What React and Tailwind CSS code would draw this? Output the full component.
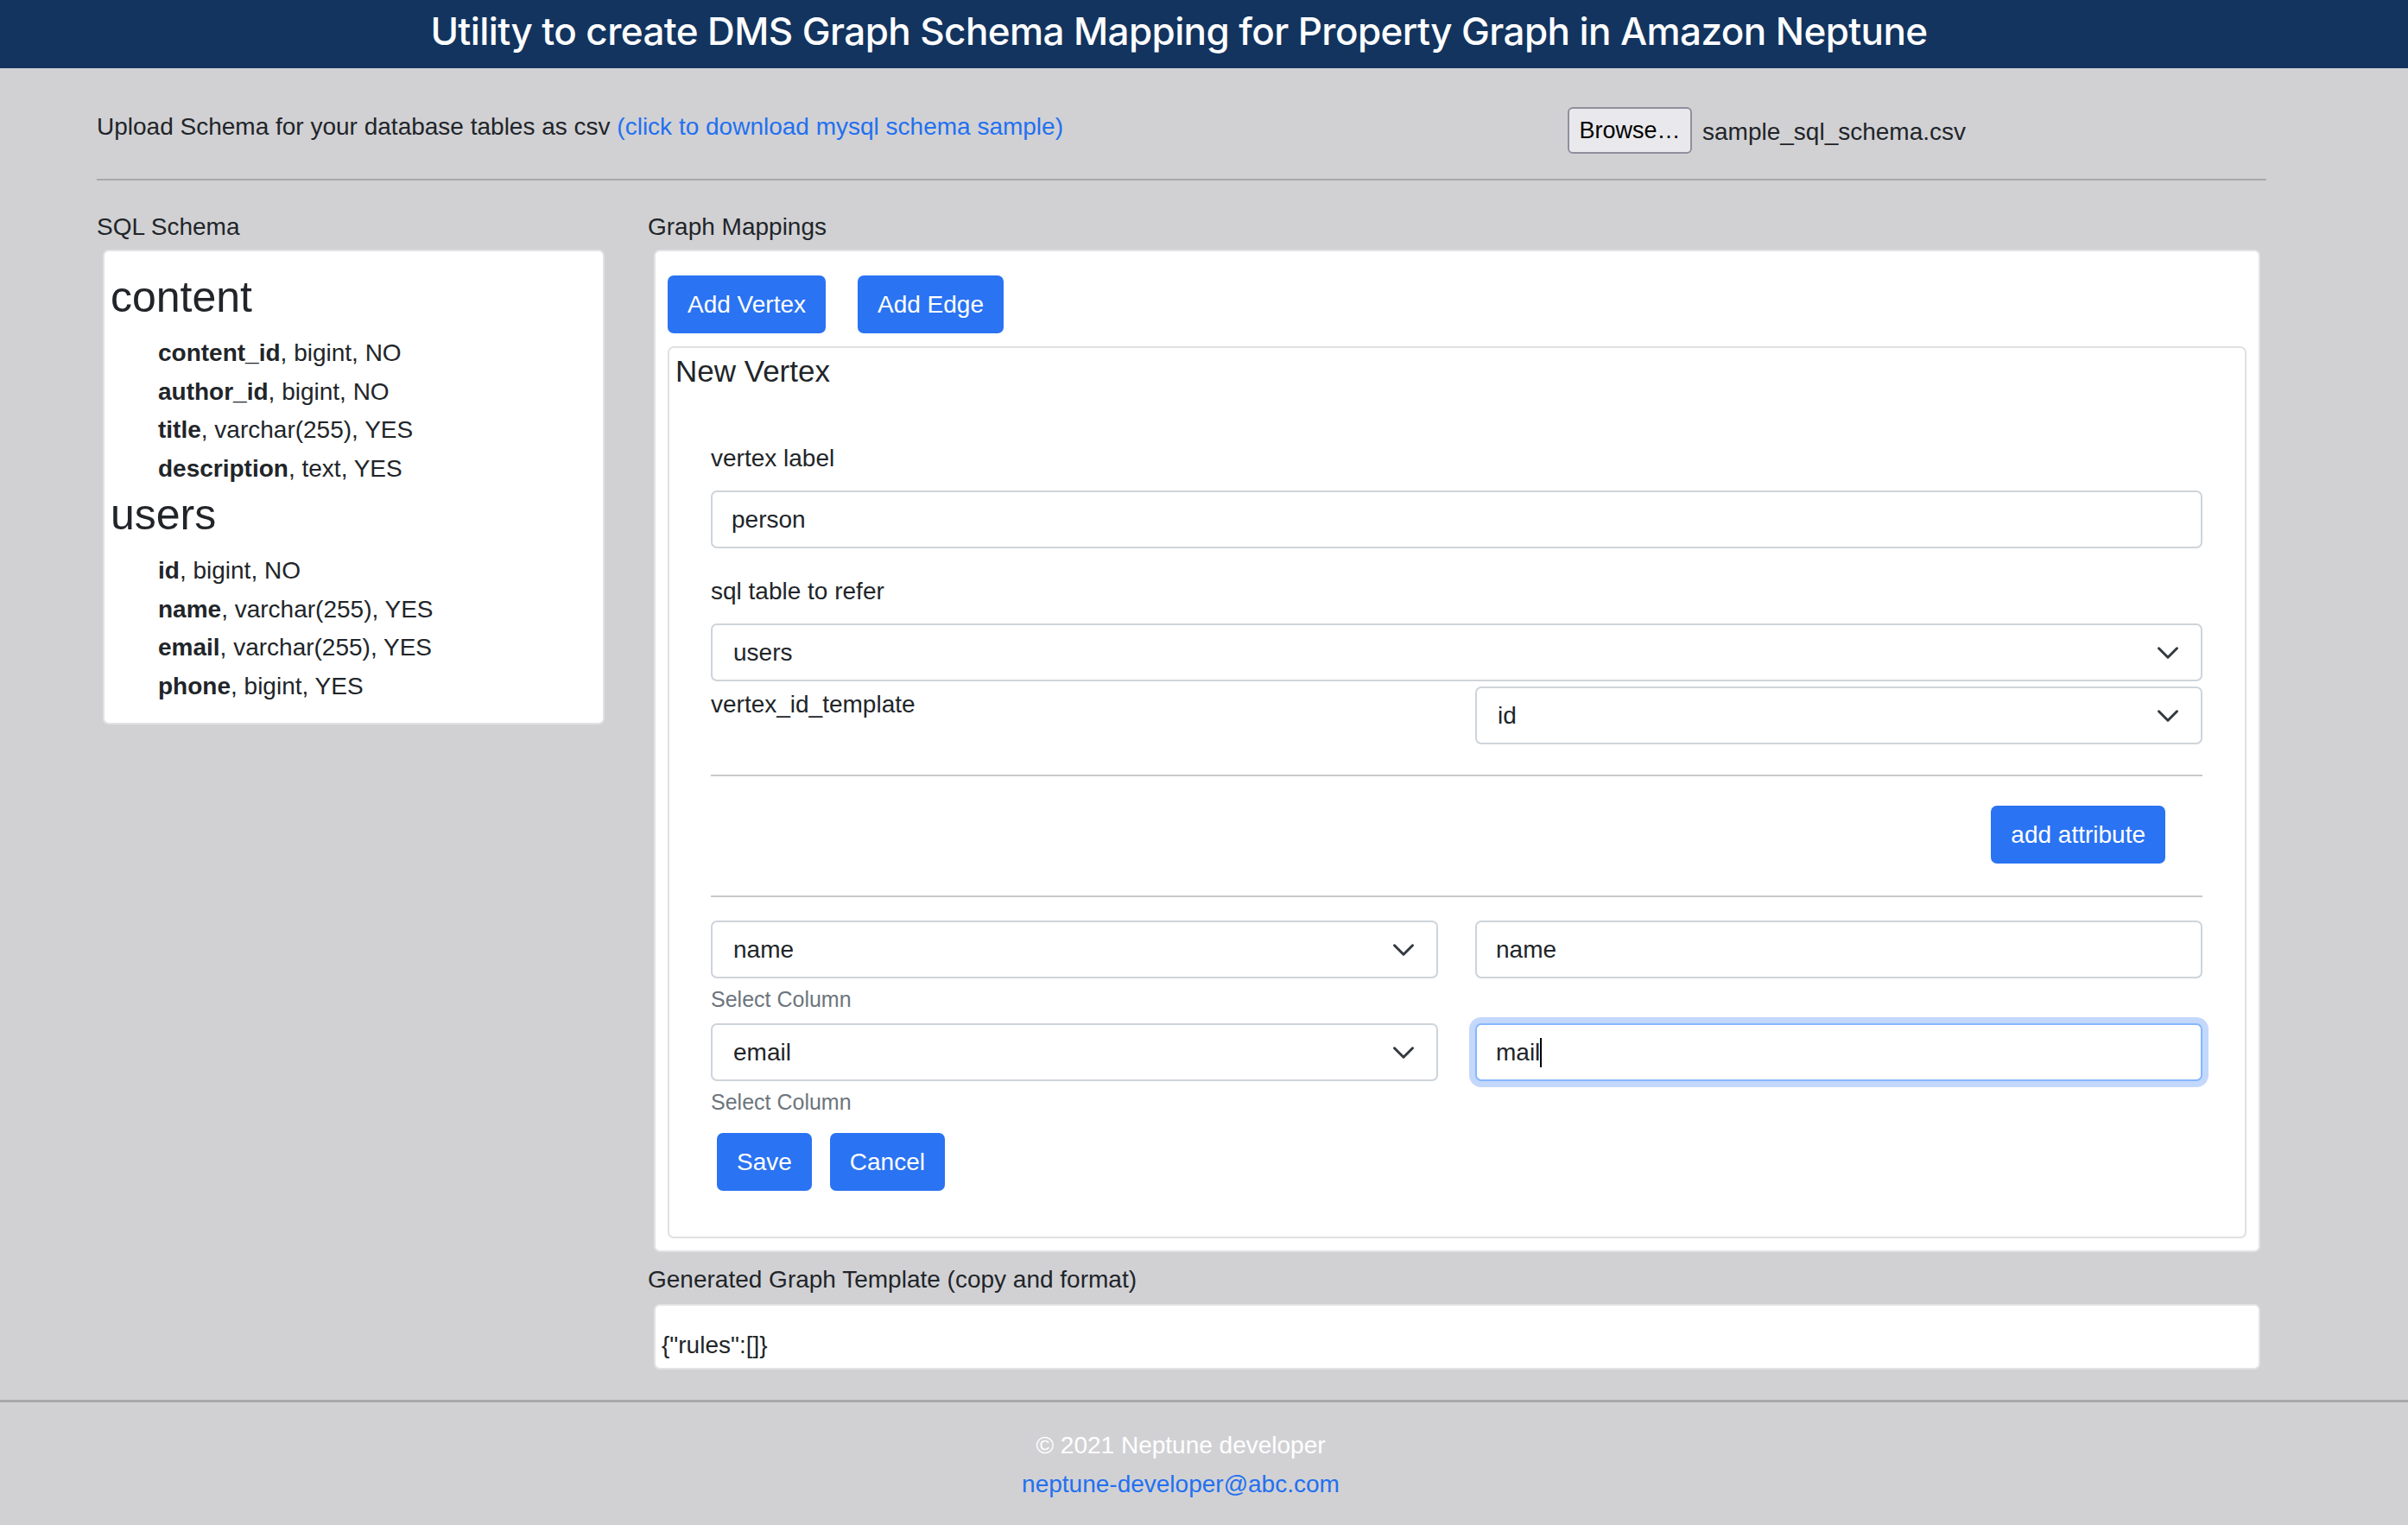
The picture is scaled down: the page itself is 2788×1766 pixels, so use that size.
import React from 'react';

const tables = [
    {
        name: 'content',
        columns: [
            ['content_id', 'bigint', 'NO'],
            ['author_id', 'bigint', 'NO'],
            ['title', 'varchar(255)', 'YES'],
            ['description', 'text', 'YES'],
        ],
    },
    {
        name: 'users',
        columns: [
            ['id', 'bigint', 'NO'],
            ['name', 'varchar(255)', 'YES'],
            ['email', 'varchar(255)', 'YES'],
            ['phone', 'bigint', 'YES'],
        ],
    },
];

const Chevron = () => (
    <svg viewBox="0 0 16 16" className="w-[28px] h-[28px]" fill="none" stroke="#343a40" strokeWidth="1.75" strokeLinecap="round" strokeLinejoin="round">
        <path d="m2 5 6 6 6-6" />
    </svg>
);

const SelectBox = ({ value }) => (
    <div className="h-[67px] w-full bg-white border-2 border-[#ced4da] rounded-[7px] flex items-center justify-between pl-[24px] pr-[24px]">
        <span>{value}</span>
        <Chevron />
    </div>
);

const InputBox = ({ value, focused }) => (
    <div
        className={`h-[67px] w-full bg-white border-2 rounded-[7px] flex items-center pl-[22px] ${
            focused ? 'border-[#86b7fe] ring-[7px] ring-[#c3d8fb]' : 'border-[#ced4da]'
        }`}
    >
        <span>{value}</span>
        {focused && <span className="w-[2px] h-[34px] bg-black" />}
    </div>
);

const Button = ({ children, className = '' }) => (
    <button className={`h-[67px] px-[23px] bg-[#2a73f2] text-white rounded-[7px] text-[28px] ${className}`}>
        {children}
    </button>
);

const App = () => {
    return (
        <div className="min-h-[1766px] bg-[#d1d1d4] text-[#212529] text-[28px] leading-[42px] font-['Liberation_Sans',Arial,sans-serif]">
            {/* header */}
            <div className="h-[79px] bg-[#12345f] flex justify-center items-center pr-[58px] pb-[6px]">
                <h1 className="text-white text-[44px] font-medium leading-[55px] tracking-[-0.6px] font-['Inter',sans-serif]">
                    Utility to create DMS Graph Schema Mapping for Property Graph in Amazon Neptune
                </h1>
            </div>

            {/* upload row */}
            <div className="pl-[112px] pt-[45px] flex items-start">
                <div className="w-[1703px] pt-[2px]">
                    Upload Schema for your database tables as csv{' '}
                    <a className="text-[#2270f0]">(click to download mysql schema sample)</a>
                </div>
                <div className="flex items-center">
                    <button className="h-[54px] w-[144px] bg-[#e9e9ed] border-2 border-[#8f8f9d] rounded-[6px] text-[27px] text-black">
                        Browse…
                    </button>
                    <span className="ml-[12px] mt-[4px]">sample_sql_schema.csv</span>
                </div>
            </div>
            <div className="ml-[112px] w-[2512px] h-[2px] bg-[#a9a9ab] mt-[29px]" />

            {/* main */}
            <div className="flex pl-[112px] pt-[30px]">
                <div className="w-[638px]">
                    <div className="h-[42px] pt-[3px] leading-[42px] mb-[8px]">SQL Schema</div>
                    <div className="ml-[7px] w-[581px] bg-white border-2 border-[#e2e2e4] rounded-[7px] pl-[7px] pt-[23px] pb-[20px]">
                        {tables.map((t, i) => (
                            <div key={t.name}>
                                <h3 className={`text-[50px] leading-[60px] ${i > 0 ? 'mt-[1px]' : ''}`}>{t.name}</h3>
                                <ul className="pl-[55px] mt-[13px]">
                                    {t.columns.map(([col, type, nullable]) => (
                                        <li key={col} className="leading-[44.5px]">
                                            <b>{col}</b>, {type}, {nullable}
                                        </li>
                                    ))}
                                </ul>
                            </div>
                        ))}
                    </div>
                </div>

                <div className="w-[1867px]">
                    <div className="h-[42px] pt-[3px] leading-[42px] mb-[8px]">Graph Mappings</div>
                    <div className="ml-[7px] w-[1860px] bg-white border-2 border-[#e2e2e4] rounded-[7px] px-[14px] pt-[28px] pb-[14px]">
                        <div className="flex gap-[37px]">
                            <Button>Add Vertex</Button>
                            <Button>Add Edge</Button>
                        </div>
                        <div className="mt-[15px] border-2 border-[#e1e1e3] rounded-[7px] pl-[7px] pt-[5px] pb-[53px]">
                            <h5 className="text-[35px] leading-[43px]">New Vertex</h5>
                            <div className="pl-[41px] pr-[49px] mt-[59px]">
                                <div className="leading-[42px]">vertex label</div>
                                <div className="mt-[16px]">
                                    <InputBox value="person" />
                                </div>
                                <div className="mt-[29px] leading-[42px]">sql table to refer</div>
                                <div className="mt-[16px]">
                                    <SelectBox value="users" />
                                </div>
                                <div className="mt-[6px] flex gap-[43px]">
                                    <div className="flex-1">vertex_id_template</div>
                                    <div className="flex-1">
                                        <SelectBox value="id" />
                                    </div>
                                </div>
                                <div className="mt-[35px] h-[2px] bg-[#c9c9cb]" />
                                <div className="flex justify-end pr-[43px] mt-[34px]">
                                    <Button>add attribute</Button>
                                </div>
                                <div className="mt-[37px] h-[2px] bg-[#c9c9cb]" />
                                <div className="mt-[27px] flex gap-[43px]">
                                    <div className="flex-1">
                                        <SelectBox value="name" />
                                        <div className="text-[25px] leading-[38px] text-[#6c757d] mt-[5px]">Select Column</div>
                                    </div>
                                    <div className="flex-1">
                                        <InputBox value="name" />
                                    </div>
                                </div>
                                <div className="mt-[9px] flex gap-[43px]">
                                    <div className="flex-1">
                                        <SelectBox value="email" />
                                        <div className="text-[25px] leading-[38px] text-[#6c757d] mt-[5px]">Select Column</div>
                                    </div>
                                    <div className="flex-1">
                                        <InputBox value="mail" focused />
                                    </div>
                                </div>
                                <div className="mt-[17px] pl-[7px] flex gap-[21px]">
                                    <Button>Save</Button>
                                    <Button>Cancel</Button>
                                </div>
                            </div>
                        </div>
                    </div>

                    <div className="h-[42px] mt-[11px] mb-[7px]">Generated Graph Template (copy and format)</div>
                    <div className="ml-[7px] w-[1860px] h-[76px] bg-white border-2 border-[#e2e2e4] rounded-[7px] pl-[7px] pt-[25px]">
                        {'{"rules":[]}'}
                    </div>
                </div>
            </div>

            {/* footer */}
            <div className="mt-[35px] h-[3px] bg-[#a9a9ab]" />
            <div className="pt-[29px] flex flex-col items-center pr-[54px]">
                <div className="text-white">© 2021 Neptune developer</div>
                <a className="text-[#2270f0] mt-[3px]">neptune-developer@abc.com</a>
            </div>
        </div>
    );
};

export default App;
